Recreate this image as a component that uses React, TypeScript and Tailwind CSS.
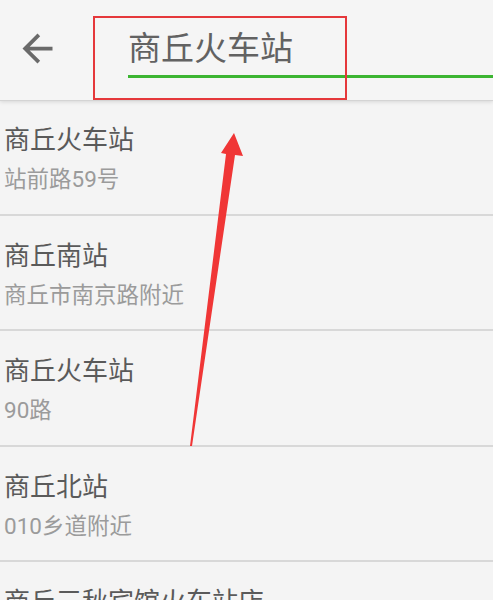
import React from "react";

const rows = [
  { title: "商丘火车站", sub: "站前路59号" },
  { title: "商丘南站", sub: "商丘市南京路附近" },
  { title: "商丘火车站", sub: "90路" },
  { title: "商丘北站", sub: "010乡道附近" },
  { title: "商丘三秋宾馆火车站店", sub: "火车站附近" },
];

export default function App() {
  return (
    <div className="relative w-[493px] h-[600px] overflow-hidden bg-[#f4f4f4] font-['Roboto','Noto_Sans_CJK_SC',sans-serif]">
      <div className="relative z-10 h-[100px] flex items-start bg-[#f5f5f5] shadow-[0_1px_0_#d4d4d4,0_2px_4px_rgba(0,0,0,0.12)]">
        <div className="ml-[15px] mt-[26px] w-[45px] h-[45px] text-[#6a6a6a]">
          <svg viewBox="0 0 24 24" width="45" height="45" fill="currentColor">
            <path d="M20 11H7.83l5.59-5.59L12 4l-8 8 8 8 1.41-1.41L7.83 13H20v-2z" />
          </svg>
        </div>
        <div className="flex-1 ml-[68px] pt-[32px] flex flex-col">
          <div className="text-[33px] leading-[33px] text-[#626262]">商丘火车站</div>
          <div className="mt-[10px] h-[3px] bg-[#3cb532]" />
        </div>
      </div>
      <div className="flex flex-col">
        {rows.map((r, i) => (
          <div key={i} className="h-[115.5px] shrink-0 border-b-2 border-[#d8d8d8] pl-[4px] pt-[25px] flex flex-col">
            <div className="text-[26px] leading-[30px] text-[#5a5a5a]">{r.title}</div>
            <div className="mt-[11px] text-[22.5px] leading-[26px] text-[#9b9b9b]">{r.sub}</div>
          </div>
        ))}
      </div>
      <div className="absolute z-20 left-[93px] top-[16px] w-[254px] h-[84px] border-2 border-[#e5383b] pointer-events-none" />
      <svg className="absolute z-20 left-0 top-0 pointer-events-none" width="493" height="600">
        <polygon
          points="234,133 243,156 235,155 192,446 190,446 226,154 221,153"
          fill="#f03636"
        />
      </svg>
    </div>
  );
}
